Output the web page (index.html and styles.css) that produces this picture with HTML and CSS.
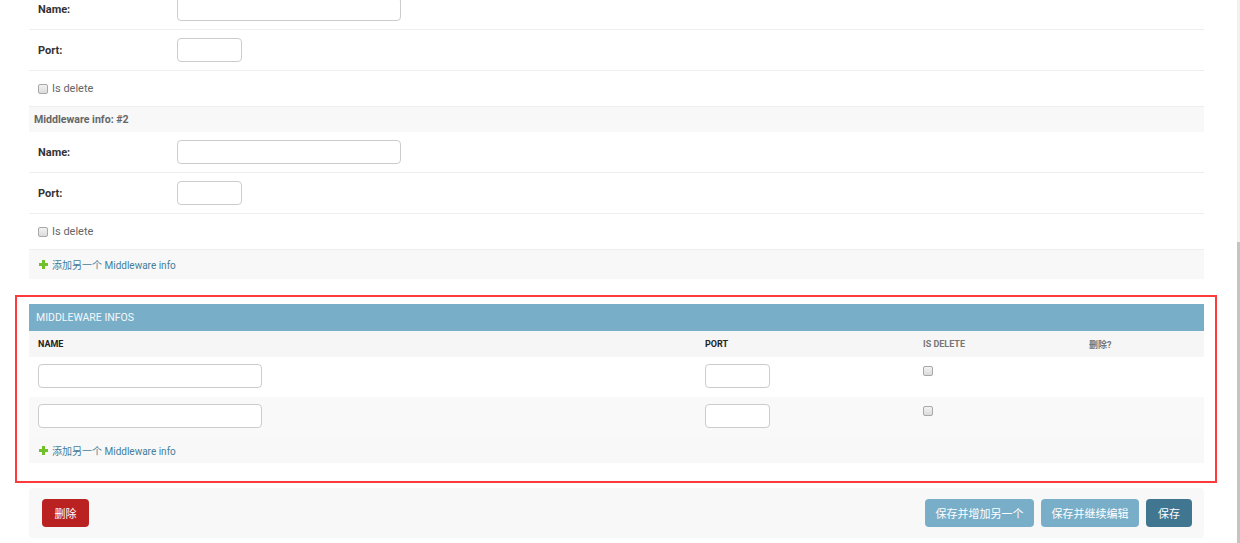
FILE: index.html
```html
<!DOCTYPE html>
<html>
	<head>
		<title>Change server</title>
		<meta charset="UTF-8">
		<link rel="stylesheet" href="styles.css">
	</head>
	<body>
		<div class="page">
			<div class="stacked">
				<div class="inline_related">
					<div class="form_row">
						<label>Name:</label>
						<input class="v_text" type="text">
					</div>
					<div class="form_row">
						<label>Port:</label>
						<input class="v_port" type="text">
					</div>
					<div class="form_row check_row">
						<input class="chk" type="checkbox"> <span class="chk_label">Is delete</span>
					</div>
				</div>
				<div class="inline_related">
					<h3>Middleware info: #2</h3>
					<div class="form_row">
						<label>Name:</label>
						<input class="v_text" type="text">
					</div>
					<div class="form_row">
						<label>Port:</label>
						<input class="v_port" type="text">
					</div>
					<div class="form_row check_row">
						<input class="chk" type="checkbox"> <span class="chk_label">Is delete</span>
					</div>
				</div>
				<div class="add_row">
					<a href="#"><svg class="plus" width="9" height="9" viewBox="0 0 9 9"><path d="M3 0h3v3h3v3H6v3H3V6H0V3h3z" fill="#70bf2b"/></svg>添加另一个 Middleware info</a>
				</div>
			</div>

			<div class="marked">
				<div class="tabular">
					<h2>Middleware infos</h2>
					<table>
						<colgroup>
							<col class="c_name">
							<col class="c_port">
							<col class="c_del">
							<col class="c_rm">
						</colgroup>
						<thead>
							<tr>
								<th class="required">Name</th>
								<th class="required">Port</th>
								<th>Is delete</th>
								<th>删除?</th>
							</tr>
						</thead>
						<tbody>
							<tr class="row1">
								<td><input class="v_text" type="text"></td>
								<td><input class="v_port" type="text"></td>
								<td><input class="chk" type="checkbox"></td>
								<td></td>
							</tr>
							<tr class="row2">
								<td><input class="v_text" type="text"></td>
								<td><input class="v_port" type="text"></td>
								<td><input class="chk" type="checkbox"></td>
								<td></td>
							</tr>
							<tr class="tab_add">
								<td colspan="4"><a href="#"><svg class="plus" width="9" height="9" viewBox="0 0 9 9"><path d="M3 0h3v3h3v3H6v3H3V6H0V3h3z" fill="#70bf2b"/></svg>添加另一个 Middleware info</a></td>
							</tr>
						</tbody>
					</table>
				</div>
			</div>

			<div class="submit_row">
				<button type="button" class="btn btn_delete">删除</button>
				<div class="right_btns">
					<button type="button" class="btn btn_light">保存并增加另一个</button>
					<button type="button" class="btn btn_light">保存并继续编辑</button>
					<button type="button" class="btn btn_save">保存</button>
				</div>
			</div>
		</div>
		<div class="scrollbar"><div class="thumb"></div></div>
	</body>
</html>
```

FILE: styles.css
```css
body {
	margin: 0;
	font-family: Roboto, "Noto Sans CJK SC", sans-serif;
	color: #333;
	background: #fff;
	overflow: hidden;
}
.page {
	width: 1175px;
	margin: -11px 0 0 29px;
}

/* stacked inline */
.form_row {
	display: flex;
	align-items: center;
	height: 24px;
	padding: 8px 0 8px 9px;
	border-bottom: 1px solid #eee;
}
.form_row label {
	width: 139px;
	font-size: 11px;
	font-weight: bold;
	color: #333;
}
.check_row {
	height: 19px;
}
.chk_label {
	margin-left: 4px;
	font-size: 11px;
	color: #666;
}
h3 {
	margin: 0;
	height: 25px;
	line-height: 25px;
	padding-left: 5px;
	background: #f8f8f8;
	font-size: 10.6px;
	font-weight: bold;
	color: #666;
}
.add_row {
	display: flex;
	align-items: center;
	height: 29px;
	padding-left: 10px;
	background: #f8f8f8;
	font-size: 10px;
}
.add_row a, .tab_add a {
	display: flex;
	align-items: center;
	color: #447e9b;
	text-decoration: none;
}
.plus {
	margin-right: 4px;
}

/* inputs */
.v_text, .v_port {
	box-sizing: border-box;
	height: 24px;
	border: 1px solid #ccc;
	border-radius: 4px;
	background: #fff;
	margin: 0;
}
.v_text {
	width: 224px;
}
.v_port {
	width: 65px;
}
.chk {
	appearance: none;
	-webkit-appearance: none;
	box-sizing: border-box;
	width: 10px;
	height: 10px;
	margin: 0;
	border: 1px solid #a8a8a8;
	border-radius: 2px;
	background: linear-gradient(#f2f2f2, #dcdcdc);
}

/* red marked tabular block */
.marked {
	margin: 16px -13px 0 -14px;
	padding: 7px 11px 18px 12px;
	border: 2px solid #ff3a3a;
}
h2 {
	margin: 0;
	height: 27px;
	line-height: 27px;
	padding-left: 7px;
	background: #79aec8;
	color: #f4f8fa;
	font-size: 10.5px;
	font-weight: normal;
	text-transform: uppercase;
}
table {
	width: 100%;
	border-collapse: collapse;
	table-layout: fixed;
}
.c_name { width: 667px; }
.c_port { width: 218px; }
.c_del { width: 166px; }
.c_rm { width: 124px; }
thead th {
	height: 26px;
	padding: 0 9px;
	background: #f6f6f6;
	text-align: left;
	font-size: 9px;
	font-weight: bold;
	color: #777;
	text-transform: uppercase;
}
thead th.required {
	color: #222;
}
tbody td {
	height: 26px;
	padding: 7px 9px;
	vertical-align: top;
}
tbody td .chk {
	display: block;
	margin: 2px 0 0 0;
}
.row2 td {
	background: #f9f9f9;
}
.tab_add td {
	height: 26px;
	padding: 0 10px;
	vertical-align: middle;
	background: #f8f8f8;
	font-size: 10px;
}

/* submit buttons */
.submit_row {
	display: flex;
	align-items: center;
	justify-content: space-between;
	height: 50px;
	margin-top: 5px;
	padding: 0 12px 0 13px;
	background: #f8f8f8;
	border-radius: 4px;
}
.right_btns {
	display: flex;
	gap: 7px;
}
.btn {
	height: 28px;
	padding: 0 10.5px;
	border: 0;
	border-radius: 4px;
	color: #fff;
	font-family: inherit;
	font-size: 11px;
}
.btn_delete {
	background: #ba2121;
	padding: 0 12.5px;
}
.btn_light {
	background: #79aec8;
}
.btn_save {
	background: #417690;
	padding: 0 12px;
}

.scrollbar {
	position: fixed;
	top: 0;
	right: 0;
	width: 3px;
	height: 100%;
	background: #f1f1f1;
}
.thumb {
	margin-top: 242px;
	height: 301px;
	background: #c4c4c4;
}
```
